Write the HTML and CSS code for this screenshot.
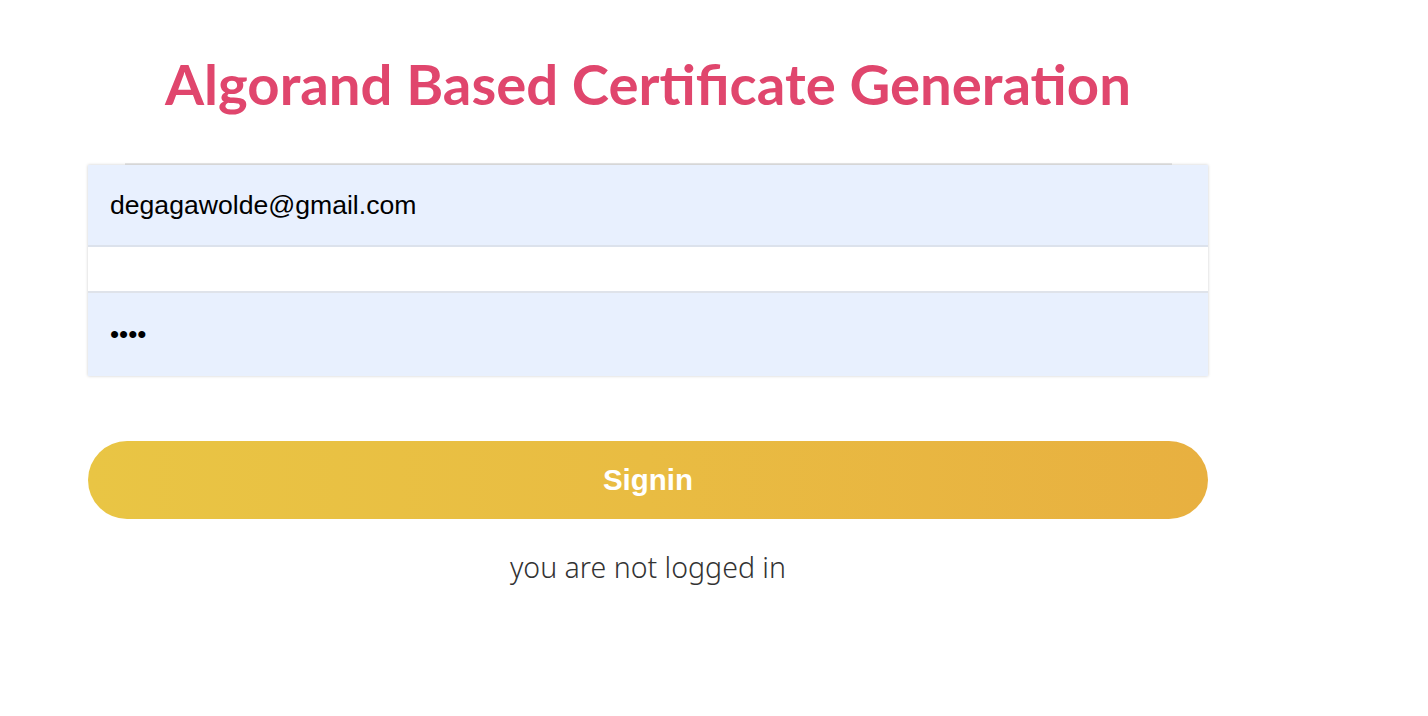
FILE: index.html
```html
<!DOCTYPE html>
<html lang="en">
<head>
<meta charset="utf-8">
<title>Algorand Based Certificate Generation</title>
<link rel="stylesheet" href="styles.css">
</head>
<body>
<div class="page">
  <h1 class="title">Algorand Based Certificate Generation</h1>
  <div class="topline"></div>
  <form class="form">
    <div class="fields">
      <input class="field field-filled field-email" type="text" value="degagawolde@gmail.com">
      <input class="field field-blank" type="text" value="">
      <input class="field field-filled field-pass" type="password" value="1234">
    </div>
    <button class="signin" type="button">Signin</button>
  </form>
  <p class="status">you are not logged in</p>
</div>
</body>
</html>
```

FILE: styles.css
```css
html, body {
  margin: 0;
  padding: 0;
  background: #ffffff;
}
body {
  padding: 8px;
}
.page {
  width: 1120px;
  margin-left: 80px;
  display: flex;
  flex-direction: column;
}
.title {
  font-family: Lato, "Open Sans", sans-serif;
  font-weight: 700;
  font-size: 56.3px;
  line-height: 72px;
  color: #e0466d;
  text-align: center;
  margin: 39px 0 0 0;
}
.topline {
  height: 2px;
  margin: 44px 36px 0 37px;
  background: #e8e8e8;
}
.form {
  display: flex;
  flex-direction: column;
  margin: 0;
}
.fields {
  display: flex;
  flex-direction: column;
  box-shadow: 0 0 3px rgba(0, 0, 0, 0.2);
}
.field {
  display: block;
  box-sizing: border-box;
  width: 100%;
  margin: 0;
  border: none;
  border-radius: 0;
  outline: none;
  font-family: "Liberation Sans", Arial, sans-serif;
  font-size: 26.6px;
  color: #000;
  padding: 0 22px;
}
.field-filled {
  background: #e8f0fe;
}
.field-email {
  height: 82px;
  border-bottom: 2px solid #dce2ec;
}
.field-blank {
  height: 46px;
  background: #ffffff;
  border-bottom: 2px solid #dfe3ea;
}
.field-pass {
  height: 83px;
  font-size: 26px;
}
.signin {
  margin-top: 65px;
  height: 78px;
  border: none;
  border-radius: 39px;
  background: linear-gradient(90deg, #e9c544 0%, #e9bc42 50%, #e8b040 100%);
  color: #ffffff;
  font-family: "Liberation Sans", Arial, sans-serif;
  font-weight: 700;
  font-size: 29.5px;
  cursor: pointer;
}
.status {
  margin: 29px 0 0 0;
  text-align: center;
  font-family: "Noto Sans", sans-serif;
  font-weight: 300;
  font-size: 28.5px;
  color: #333333;
}
```
